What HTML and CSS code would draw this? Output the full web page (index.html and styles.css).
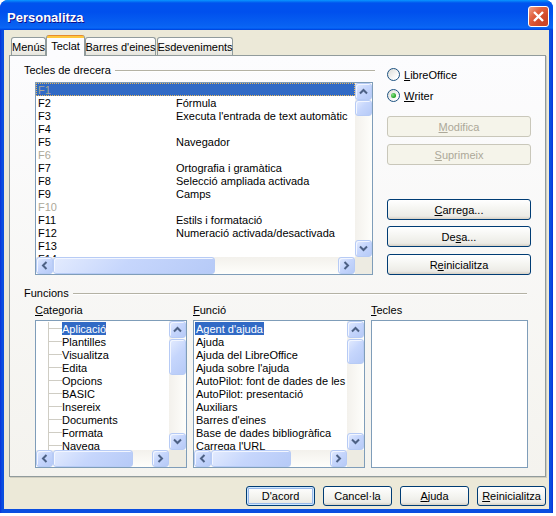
FILE: index.html
```html
<!DOCTYPE html>
<html lang="ca">

<head>
	<meta charset="UTF-8">
	<title>Personalitza</title>
	<link rel="stylesheet" href="styles.css">
</head>

<body>
	<svg class="defs" aria-hidden="true">
		<symbol id="ar-up" viewBox="0 0 15 15"><path d="M4 9.5L7.5 6L11 9.5" /></symbol>
		<symbol id="ar-down" viewBox="0 0 15 15"><path d="M4 5.5L7.5 9L11 5.5" /></symbol>
		<symbol id="ar-left" viewBox="0 0 15 15"><path d="M9.5 4L6 7.5L9.5 11" /></symbol>
		<symbol id="ar-right" viewBox="0 0 15 15"><path d="M5.5 4L9 7.5L5.5 11" /></symbol>
		<symbol id="grip-v" viewBox="0 0 7 8">
			<path class="g1" d="M0 0.5H7M0 2.5H7M0 4.5H7M0 6.5H7" />
			<path class="g2" d="M1 1.5H8M1 3.5H8M1 5.5H8M1 7.5H8" />
		</symbol>
		<symbol id="grip-h" viewBox="0 0 8 7">
			<path class="g1" d="M0.5 0V7M2.5 0V7M4.5 0V7M6.5 0V7" />
			<path class="g2" d="M1.5 1V8M3.5 1V8M5.5 1V8M7.5 1V8" />
		</symbol>
	</svg>

	<div class="window">
		<div class="title-bar">
			<span class="title">Personalitza</span>
			<span class="close"><svg viewBox="0 0 19 19"><path d="M5 5L14 14M14 5L5 14" /></svg></span>
		</div>

		<div class="window-body">
			<div class="tabs">
				<div class="tab t-menus">Menús</div>
				<div class="tab active t-teclat">Teclat</div>
				<div class="tab t-barres">Barres d'eines</div>
				<div class="tab t-esdev">Esdeveniments</div>
			</div>

			<div class="panel">
				<div class="top">
					<div class="shortcuts">
						<div class="group-head">Tecles de drecera</div>
						<div class="listbox keys">
							<div class="list-content">
								<div class="row sel"><span class="key">F1</span></div>
								<div class="row"><span class="key">F2</span><span>Fórmula</span></div>
								<div class="row"><span class="key">F3</span><span>Executa l'entrada de text automàtic</span></div>
								<div class="row"><span class="key">F4</span></div>
								<div class="row"><span class="key">F5</span><span>Navegador</span></div>
								<div class="row dim"><span class="key">F6</span></div>
								<div class="row"><span class="key">F7</span><span>Ortografia i gramàtica</span></div>
								<div class="row"><span class="key">F8</span><span>Selecció ampliada activada</span></div>
								<div class="row"><span class="key">F9</span><span>Camps</span></div>
								<div class="row dim"><span class="key">F10</span></div>
								<div class="row"><span class="key">F11</span><span>Estils i formatació</span></div>
								<div class="row"><span class="key">F12</span><span>Numeració activada/desactivada</span></div>
								<div class="row"><span class="key">F13</span></div>
								<div class="row"><span class="key">F14</span></div>
							</div>
							<div class="vscroll">
								<span class="sb-btn"><svg><use href="#ar-up" /></svg></span>
								<span class="sb-thumb th-keys"><svg class="grip-v"><use href="#grip-v" /></svg></span>
								<span class="sb-track"></span>
								<span class="sb-btn"><svg><use href="#ar-down" /></svg></span>
							</div>
							<div class="hscroll">
								<span class="sb-btn"><svg><use href="#ar-left" /></svg></span>
								<span class="sb-thumb hth-keys"><svg class="grip-h"><use href="#grip-h" /></svg></span>
								<span class="sb-track"></span>
								<span class="sb-btn"><svg><use href="#ar-right" /></svg></span>
							</div>
							<div class="corner"></div>
						</div>
					</div>

					<div class="side">
						<div class="radio"><span class="rbox"></span><u>L</u>ibreOffice</div>
						<div class="radio"><span class="rbox"><span class="rdot"></span></span><u>W</u>riter</div>
						<div class="btn disabled b-mod"><u>M</u>odifica</div>
						<div class="btn disabled b-sup"><u>S</u>uprimeix</div>
						<div class="btn b-car"><u>C</u>arrega...</div>
						<div class="btn b-desa">De<u>s</u>a...</div>
						<div class="btn b-reini">R<u>e</u>inicialitza</div>
					</div>
				</div>

				<div class="group-head wide">Funcions</div>

				<div class="functions">
					<div class="fcol">
						<div class="flabel"><u>C</u>ategoria</div>
						<div class="listbox cat">
							<div class="list-content tree">
								<div class="row"><span class="branch"></span><span class="item sel">Aplicació</span></div>
								<div class="row"><span class="branch"></span><span class="item">Plantilles</span></div>
								<div class="row"><span class="branch"></span><span class="item">Visualitza</span></div>
								<div class="row"><span class="branch"></span><span class="item">Edita</span></div>
								<div class="row"><span class="branch"></span><span class="item">Opcions</span></div>
								<div class="row"><span class="branch"></span><span class="item">BASIC</span></div>
								<div class="row"><span class="branch"></span><span class="item">Insereix</span></div>
								<div class="row"><span class="branch"></span><span class="item">Documents</span></div>
								<div class="row"><span class="branch"></span><span class="item">Formata</span></div>
								<div class="row"><span class="branch"></span><span class="item">Navega</span></div>
							</div>
							<div class="vscroll">
								<span class="sb-btn"><svg><use href="#ar-up" /></svg></span>
								<span class="sb-thumb th-cat"><svg class="grip-v"><use href="#grip-v" /></svg></span>
								<span class="sb-track"></span>
								<span class="sb-btn"><svg><use href="#ar-down" /></svg></span>
							</div>
							<div class="hscroll">
								<span class="sb-btn"><svg><use href="#ar-left" /></svg></span>
								<span class="sb-thumb hth-small"><svg class="grip-h"><use href="#grip-h" /></svg></span>
								<span class="sb-track"></span>
								<span class="sb-btn"><svg><use href="#ar-right" /></svg></span>
							</div>
							<div class="corner"></div>
						</div>
					</div>

					<div class="fcol">
						<div class="flabel"><u>F</u>unció</div>
						<div class="listbox func">
							<div class="list-content flist">
								<div class="row"><span class="item sel">Agent d'ajuda</span></div>
								<div class="row"><span class="item">Ajuda</span></div>
								<div class="row"><span class="item">Ajuda del LibreOffice</span></div>
								<div class="row"><span class="item">Ajuda sobre l'ajuda</span></div>
								<div class="row"><span class="item">AutoPilot: font de dades de les</span></div>
								<div class="row"><span class="item">AutoPilot: presentació</span></div>
								<div class="row"><span class="item">Auxiliars</span></div>
								<div class="row"><span class="item">Barres d'eines</span></div>
								<div class="row"><span class="item">Base de dades bibliogràfica</span></div>
								<div class="row"><span class="item">Carrega l'URL</span></div>
							</div>
							<div class="vscroll">
								<span class="sb-btn"><svg><use href="#ar-up" /></svg></span>
								<span class="sb-thumb th-func"><svg class="grip-v"><use href="#grip-v" /></svg></span>
								<span class="sb-track"></span>
								<span class="sb-btn"><svg><use href="#ar-down" /></svg></span>
							</div>
							<div class="hscroll">
								<span class="sb-btn"><svg><use href="#ar-left" /></svg></span>
								<span class="sb-thumb hth-small"><svg class="grip-h"><use href="#grip-h" /></svg></span>
								<span class="sb-track"></span>
								<span class="sb-btn"><svg><use href="#ar-right" /></svg></span>
							</div>
							<div class="corner"></div>
						</div>
					</div>

					<div class="fcol">
						<div class="flabel"><u>T</u>ecles</div>
						<div class="listbox tkeys"></div>
					</div>
				</div>
			</div>

			<div class="dlg-buttons">
				<div class="btn default">D'acord</div>
				<div class="btn">Cancel·la</div>
				<div class="btn"><u>A</u>juda</div>
				<div class="btn"><u>R</u>einicialitza</div>
			</div>
		</div>
	</div>
</body>

</html>
```

FILE: styles.css
```css
* {
	box-sizing: border-box;
}

body {
	margin: 0;
	background: #fff;
	font: 11px "Liberation Sans", Arial, sans-serif;
	color: #000;
}

u {
	text-decoration: underline;
	text-underline-offset: 1px;
}

.defs {
	display: block;
	width: 0;
	height: 0;
	overflow: hidden;
}

/* window frame */
.window {
	width: 553px;
	height: 513px;
	padding: 0 4px 4px;
	background: linear-gradient(90deg, #0831d9, #0a4ee0 2px, #0a4ee0 calc(100% - 2px), #0831d9);
	border-radius: 8px 8px 0 0;
	display: flex;
	flex-direction: column;
}

.title-bar {
	height: 30px;
	margin: 0 -4px;
	padding: 2px 4px 0 7px;
	border-radius: 8px 8px 0 0;
	background: linear-gradient(180deg, #0997ff, #0053ee 10%, #0050ee 40%, #0862f2 85%, #0a66f6 92%, #0059f0 96%, #003dd7);
	display: flex;
	align-items: center;
}

.title {
	padding-top: 2px;
	color: #fff;
	font: bold 13px "Liberation Sans", Arial, sans-serif;
	text-shadow: 1px 1px #0f1089;
}

.close {
	margin-left: auto;
	width: 21px;
	height: 21px;
	border: 1px solid #fff;
	border-radius: 3px;
	background: radial-gradient(circle at 80% 85%, #cc4628, transparent 60%), linear-gradient(135deg, #f0a38a, #e2623f 35%, #c83c1d);
	display: flex;
}

.close svg {
	width: 19px;
	height: 19px;
	stroke: #fff;
	stroke-width: 2.4;
	fill: none;
}

.window-body {
	flex: 1;
	background: #ece9d8;
	padding: 5px 3px 0 5px;
}

/* tabs */
.tabs {
	display: flex;
	align-items: flex-end;
	height: 21px;
	margin-left: 2px;
	position: relative;
	z-index: 1;
}

.tab {
	height: 18px;
	margin-bottom: 1px;
	border: 1px solid #919b9c;
	border-bottom: none;
	border-radius: 3px 3px 0 0;
	background: linear-gradient(#fff, #f4f3ef 60%, #e6e5dd);
	display: flex;
	align-items: center;
	justify-content: center;
	white-space: nowrap;
}

.tab.active {
	height: 21px;
	margin-bottom: 0;
	border-top: none;
	padding-top: 1px;
	background: linear-gradient(#e68b2c 0 1px, #ffc73c 1px 3px, #fcfcfe 3px);
}

.t-menus { width: 35px; }
.t-teclat { width: 39px; }
.t-barres { width: 71px; }
.t-esdev { width: 76px; margin-left: 1px; }

.panel {
	width: 537px;
	height: 422px;
	margin-top: -1px;
	border: 1px solid #919b9c;
	background: linear-gradient(#fcfcfe, #f4f3ee);
	box-shadow: 1px 1px 0 #d0cebf;
	padding: 8px 0 0 14px;
}

.top {
	display: flex;
}

.shortcuts {
	width: 351px;
}

.group-head {
	display: flex;
	align-items: center;
	height: 13px;
	line-height: 13px;
	white-space: nowrap;
}

.group-head::after {
	content: "";
	flex: 1;
	margin-left: 4px;
	border-top: 1px solid #b4b2a4;
	border-bottom: 1px solid #fff;
}

.group-head.wide {
	width: 503px;
	margin-top: 12px;
}

/* list boxes */
.listbox {
	border: 1px solid #7f9db9;
	background: #fff;
	display: grid;
	grid-template-columns: minmax(0, 1fr) 17px;
	grid-template-rows: minmax(0, 1fr) 17px;
	overflow: hidden;
}

.keys {
	width: 338px;
	height: 193px;
	margin: 5px 0 0 11px;
}

.list-content {
	overflow: hidden;
}

.row {
	display: flex;
	height: 13px;
	padding-top: 1px;
	line-height: 13px;
	white-space: nowrap;
}

.key {
	flex: none;
	width: 140px;
	padding-left: 2px;
}

.keys .row.sel {
	background: #316ac5;
	outline: 1px dotted #e9b85c;
	outline-offset: -1px;
}

.keys .row.sel .key {
	color: #a9a795;
}

.row.dim .key {
	color: #aca899;
}

.tree,
.flist {
	padding-top: 1px;
}

.tree .row {
	padding-top: 0;
}

.tree .item {
	padding: 1px 0 0;
	line-height: 12px;
}

.branch {
	flex: none;
	width: 14px;
	height: 13px;
	margin-left: 12px;
	border-left: 1px solid #cfcdc4;
	background: linear-gradient(#cfcdc4, #cfcdc4) no-repeat 0 6px / 100% 1px;
}

.flist .row {
	padding: 0 0 0 1px;
}

.item {
	padding: 1px 1px 0;
	line-height: 12px;
}

.item.sel {
	background: #316ac5;
	color: #fff;
}

/* scrollbars */
.vscroll {
	display: flex;
	flex-direction: column;
	background: linear-gradient(90deg, #f3f1ec, #fefefb);
}

.hscroll {
	display: flex;
	background: linear-gradient(#f3f1ec, #fefefb);
}

.corner {
	background: #edebe2;
}

.sb-track {
	flex: 1;
}

.sb-btn,
.sb-thumb {
	flex: none;
	border: 1px solid #b7cbf5;
	border-radius: 3px;
	background: linear-gradient(135deg, #e3ebfe, #c6d6fc 45%, #b6caf7);
	box-shadow: inset 1px 1px 0 #f2f6ff;
	display: flex;
	align-items: center;
	justify-content: center;
}

.sb-btn {
	width: 17px;
	height: 17px;
}

.sb-btn svg {
	width: 15px;
	height: 15px;
	fill: none;
	stroke: #4d6185;
	stroke-width: 2;
}

.vscroll .sb-thumb {
	width: 17px;
}

.hscroll .sb-thumb {
	height: 17px;
}

.grip-v {
	width: 7px;
	height: 8px;
}

.grip-h {
	width: 8px;
	height: 7px;
}

.sb-thumb svg {
	fill: none;
	stroke-width: 1;
}

.sb-thumb .g1 {
	stroke: #eef4fe;
}

.sb-thumb .g2 {
	stroke: #8cb0f8;
}

.th-keys { height: 16px; }
.th-cat { height: 36px; margin-top: 1px; }
.th-func { height: 25px; margin-top: 1px; }
.hth-keys { width: 162px; }
.hth-small { width: 80px; }

/* right column */
.side {
	width: 144px;
	margin-left: 12px;
	padding-top: 4px;
	display: flex;
	flex-direction: column;
}

.radio {
	display: flex;
	align-items: center;
	height: 13px;
}

.radio + .radio {
	margin-top: 8px;
}

.rbox {
	width: 13px;
	height: 13px;
	margin-right: 4px;
	border: 1px solid #1c5180;
	border-radius: 50%;
	background: linear-gradient(135deg, #dcdcd7, #fff 80%);
	display: flex;
	align-items: center;
	justify-content: center;
}

.rdot {
	width: 5px;
	height: 5px;
	border-radius: 50%;
	background: radial-gradient(circle at 35% 35%, #8ae388, #21a121 70%);
}

.btn {
	height: 21px;
	border: 1px solid #003c74;
	border-radius: 3px;
	background: linear-gradient(#fff, #f4f4f0 50%, #ecebe6 85%, #d6d0c5);
	display: flex;
	align-items: center;
	justify-content: center;
	white-space: nowrap;
}

.btn.disabled {
	border-color: #c9c7ba;
	background: #f5f4ea;
	color: #aca899;
}

.b-mod { margin-top: 14px; }
.b-sup { margin-top: 7px; }
.b-car { margin-top: 34px; }
.b-desa { margin-top: 6px; }
.b-reini { margin-top: 7px; }

/* functions */
.functions {
	display: flex;
	gap: 6px;
	margin: 4px 0 0 11px;
}

.flabel {
	height: 13px;
	line-height: 13px;
	margin-bottom: 3px;
}

.cat,
.func,
.tkeys {
	height: 148px;
}

.cat { width: 152px; }
.func { width: 172px; }
.tkeys { width: 157px; }

/* dialog buttons */
.dlg-buttons {
	display: flex;
	justify-content: flex-end;
	gap: 8px;
	margin-top: 9px;
}

.dlg-buttons .btn {
	width: 69px;
	height: 20px;
}

.btn.default {
	box-shadow: inset 0 0 0 1px #cee7ff, inset 0 0 0 2px #98b8ea;
}
```
